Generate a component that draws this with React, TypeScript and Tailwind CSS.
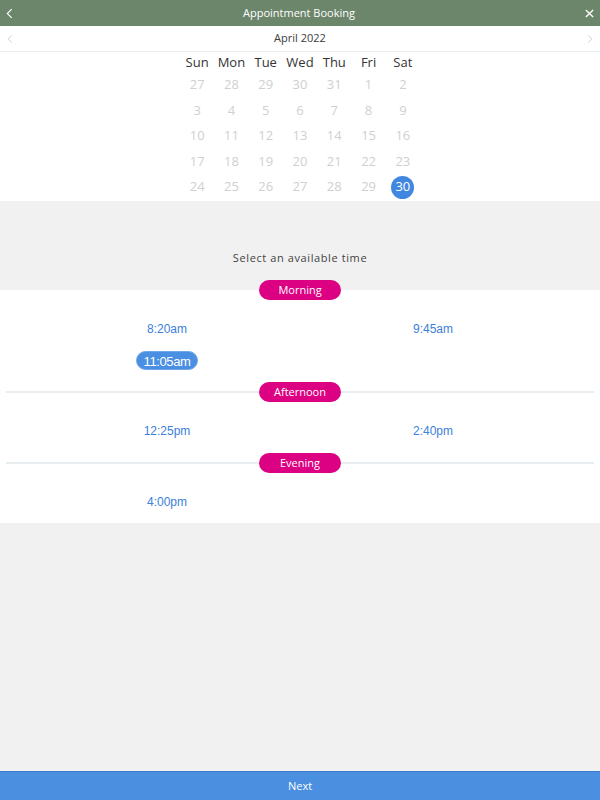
import { useState } from "react";

const weekdays = ["Sun", "Mon", "Tue", "Wed", "Thu", "Fri", "Sat"];

const weeks = [
  [27, 28, 29, 30, 31, 1, 2],
  [3, 4, 5, 6, 7, 8, 9],
  [10, 11, 12, 13, 14, 15, 16],
  [17, 18, 19, 20, 21, 22, 23],
  [24, 25, 26, 27, 28, 29, 30],
];

const sections = [
  { name: "Morning", times: ["8:20am", "9:45am", "11:05am"] },
  { name: "Afternoon", times: ["12:25pm", "2:40pm"] },
  { name: "Evening", times: ["4:00pm"] },
];

function Chevron({ dir, className }: { dir: "left" | "right"; className: string }) {
  return (
    <svg viewBox="0 0 8 12" className={className} fill="none" stroke="currentColor" strokeWidth="1.3">
      {dir === "left" ? <path d="M6.5 1 L1.5 6 L6.5 11" /> : <path d="M1.5 1 L6.5 6 L1.5 11" />}
    </svg>
  );
}

export default function App() {
  const [selected, setSelected] = useState("11:05am");

  return (
    <div className="h-screen flex flex-col bg-[#f1f1f1] font-['Open_Sans',sans-serif]">
      {/* Title bar */}
      <div className="h-[26px] shrink-0 bg-[#6c866b] flex items-center justify-between px-[6px] text-white">
        <Chevron dir="left" className="w-[7px] h-[11px]" />
        <span className="text-[11px]">Appointment Booking</span>
        <svg viewBox="0 0 10 10" className="w-[9px] h-[9px]" stroke="currentColor" strokeWidth="1.5">
          <path d="M1 1 L9 9 M9 1 L1 9" />
        </svg>
      </div>

      {/* Month switcher */}
      <div className="h-[26px] shrink-0 bg-white border-b border-[#e8ecef] flex items-center justify-between px-[7px] text-[#d2d2d2]">
        <Chevron dir="left" className="w-[6px] h-[10px]" />
        <span className="text-[11px] text-[#3a3a3a]">April 2022</span>
        <Chevron dir="right" className="w-[6px] h-[10px]" />
      </div>

      {/* Calendar */}
      <div className="bg-white shrink-0 pb-[1px]">
        <div className="w-[240px] mx-auto">
          <div className="grid grid-cols-7 h-[20px] items-center pt-[1px]">
            {weekdays.map((d) => (
              <span key={d} className="text-center text-[13px] text-[#333]">
                {d}
              </span>
            ))}
          </div>
          {weeks.map((week, i) => (
            <div key={i} className="grid grid-cols-7 h-[25.6px] items-center">
              {week.map((day, j) => {
                const active = i === 4 && j === 6;
                return (
                  <div key={j} className="flex justify-center">
                    {active ? (
                      <span className="w-[23px] h-[23px] rounded-full bg-[#3f87e0] text-white text-[13px] flex items-center justify-center">
                        {day}
                      </span>
                    ) : (
                      <span className="text-[13px] text-[#d0d0d0]">{day}</span>
                    )}
                  </div>
                );
              })}
            </div>
          ))}
        </div>
      </div>

      {/* Prompt */}
      <div className="h-[79px] shrink-0 flex items-end justify-center pb-[13px]">
        <span className="text-[11px] tracking-[0.6px] text-[#444]">Select an available time</span>
      </div>

      {/* Time slots */}
      <div className="bg-[linear-gradient(to_bottom,transparent_10px,white_10px)] shrink-0 pb-[5px]">
        {sections.map((s, idx) => (
          <div key={s.name} className={idx === sections.length - 1 ? "" : "pb-[6px]"}>
            <div className="relative h-[20px] flex items-center justify-center">
              {idx > 0 && <div className="absolute left-[6px] right-[6px] top-[9px] h-[2px] bg-[#e8edf0]" />}
              <span className="relative w-[82px] h-[20px] rounded-full bg-[#dc0082] text-white text-[11px] font-medium flex items-center justify-center">
                {s.name}
              </span>
            </div>
            <div className="grid grid-cols-2 px-[34px] pt-[14px]">
              {s.times.map((t) => (
                <div key={t} className="h-[31px] flex items-center justify-center">
                  <button
                    onClick={() => setSelected(t)}
                    className={`font-['Liberation_Sans',Arial,sans-serif] ${
                      selected === t
                        ? "h-[19px] px-[7px] rounded-full bg-[#4a8fe2] text-white text-[13px] tracking-[-0.4px] border border-[#6ea6ea]"
                        : "text-[12px] text-[#3b80d9]"
                    }`}
                  >
                    {t}
                  </button>
                </div>
              ))}
            </div>
          </div>
        ))}
      </div>

      <div className="flex-1" />

      {/* Footer */}
      <div className="h-[29px] shrink-0 bg-[#4a8fe0] border-t border-[#3b7dcc] flex items-center justify-center">
        <span className="text-white text-[11px]">Next</span>
      </div>
    </div>
  );
}
